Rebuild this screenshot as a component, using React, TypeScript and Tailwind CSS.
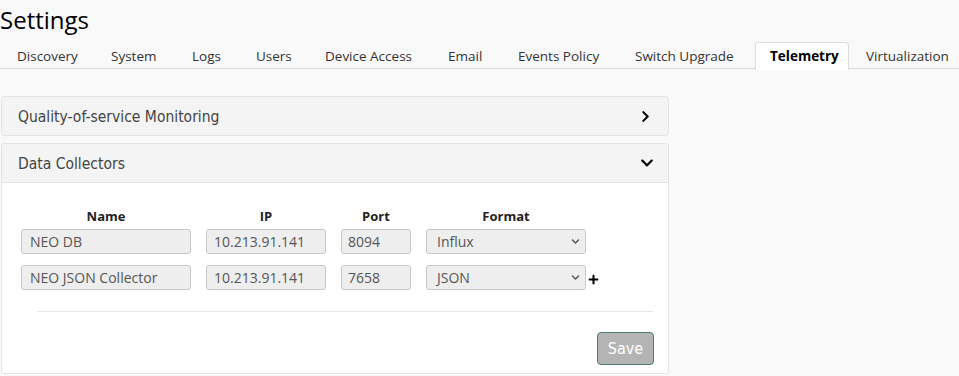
import { FaChevronRight, FaChevronDown, FaPlus } from 'react-icons/fa';

const tabs = [
  { label: 'Discovery', w: 'w-[94px]' },
  { label: 'System', w: 'w-[81px]' },
  { label: 'Logs', w: 'w-[64px]' },
  { label: 'Users', w: 'w-[69px]' },
  { label: 'Device Access', w: 'w-[123px]' },
  { label: 'Email', w: 'w-[70px]' },
  { label: 'Events Policy', w: 'w-[117px]' },
  { label: 'Switch Upgrade', w: 'w-[137px]' },
  { label: 'Telemetry', w: 'w-[94px]' },
  { label: 'Virtualization', w: 'w-[110px]' },
];

const collectors = [
  { name: 'NEO DB', ip: '10.213.91.141', port: '8094', format: 'Influx' },
  { name: 'NEO JSON Collector', ip: '10.213.91.141', port: '7658', format: 'JSON' },
];

const font = "font-['Open_Sans',sans-serif]";
const narrow = "font-['Liberation_Sans_Narrow','DejaVu_Sans_Condensed',sans-serif]";
const field =
  'h-[25px] rounded-[3px] border border-[#c8c8c8] bg-[#eeeeee] leading-[23px] text-[#555]';

function App() {
  return (
    <div className={`min-h-[376px] w-[959px] overflow-hidden bg-[#f9f9f9] text-[#222] ${font}`}>
      <h1 className="pt-[3px] text-[24px] leading-[34px] text-black">Settings</h1>
      <div className="mt-[5px] flex h-[27px] border-b border-[#dcdcdc] text-[13.5px]">
        {tabs.map((t) =>
          t.label === 'Telemetry' ? (
            <div
              key={t.label}
              className={`${t.w} -mb-px h-[28px] shrink-0 whitespace-nowrap rounded-t-[3px] border border-b-0 border-[#dcdcdc] bg-white pl-[14px] pt-[3px] font-bold text-black`}
            >
              {t.label}
            </div>
          ) : (
            <div
              key={t.label}
              className={`${t.w} shrink-0 whitespace-nowrap pl-[17px] pt-[4px] text-[#333]`}
            >
              {t.label}
            </div>
          )
        )}
      </div>

      <div className="ml-px mt-[27px] w-[668px]">
        <div className="flex h-[40px] items-center justify-between rounded-[3px] border border-[#e3e3e3] bg-[#f4f4f4] pl-[16px] pr-[16px]">
          <span className={`${narrow} pt-[3px] text-[15.5px] text-[#444]`}>Quality-of-service Monitoring</span>
          <FaChevronRight className="text-[13px] text-black" />
        </div>

        <div className="mt-[7px] rounded-[3px] border border-[#e3e3e3] bg-white">
          <div className="flex h-[39px] items-center justify-between border-b border-[#e3e3e3] bg-[#f4f4f4] pl-[16px] pr-[14px]">
            <span className={`${narrow} pt-[3px] text-[15.5px] text-[#444]`}>Data Collectors</span>
            <FaChevronDown className="text-[14px] text-black" />
          </div>

          <div className="pt-[25px]">
            <div className="ml-[19px] flex flex-col text-[14px]">
              <div className="grid grid-cols-[170px_120px_70px_160px] gap-x-[15px] text-[13px] font-bold leading-[16px]">
                <div className="text-center">Name</div>
                <div className="text-center">IP</div>
                <div className="text-center">Port</div>
                <div className="text-center">Format</div>
              </div>
              {collectors.map((c, i) => (
                <div
                  key={c.name}
                  className={`grid grid-cols-[170px_120px_70px_160px_12px] items-center gap-x-[15px] ${i === 0 ? 'mt-[5px]' : 'mt-[11px]'}`}
                >
                  <div className={`${field} pl-[8px]`}>{c.name}</div>
                  <div className={`${field} pl-[7px]`}>{c.ip}</div>
                  <div className={`${field} pl-[6px]`}>{c.port}</div>
                  <div className={`${field} flex items-center justify-between pl-[10px] pr-[5px]`}>
                    <span>{c.format}</span>
                    <FaChevronDown className="text-[9px] text-[#555]" />
                  </div>
                  {i === 1 && <FaPlus className="-ml-[13px] mt-[3px] text-[11px] text-black" />}
                </div>
              ))}
            </div>
            <div className="ml-[35px] mr-[15px] mt-[21px] border-t border-[#e6e6e6]" />
            <div className="flex justify-end px-[14px] pb-[8px] pt-[20px]">
              <button
                className={`${narrow} h-[33px] w-[57px] rounded-[4px] border border-[#4d7f6c] bg-[#b4b4b4] text-[16px] text-white`}
              >
                Save
              </button>
            </div>
          </div>
        </div>
      </div>
    </div>
  );
}

export default App;
